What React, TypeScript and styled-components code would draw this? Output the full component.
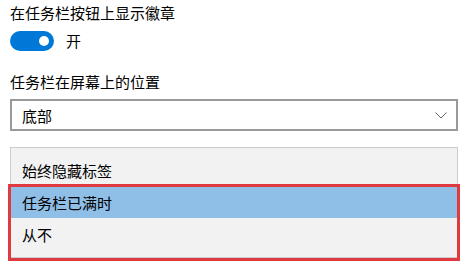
import styled, { createGlobalStyle } from "styled-components";

const GlobalStyle = createGlobalStyle`
  html, body {
    margin: 0;
    padding: 0;
    background: #ffffff;
  }
  body {
    font-family: "Noto Sans CJK SC", "Noto Sans", sans-serif;
    color: #000000;
  }
`;

const Page = styled.div`
  width: 471px;
  height: 268px;
  overflow: hidden;
  padding: 3px 13px 0 10px;
  box-sizing: border-box;
`;

const Label = styled.div`
  font-size: 15px;
  line-height: 20px;
`;

const ToggleRow = styled.div`
  display: flex;
  align-items: center;
  gap: 12px;
  margin-top: 8px;
  height: 20px;
`;

const Toggle = styled.div<{ $on: boolean }>`
  width: 44px;
  height: 20px;
  border-radius: 10px;
  background: ${(p) => (p.$on ? "#0078d7" : "#ffffff")};
  box-sizing: border-box;
  display: flex;
  align-items: center;
  justify-content: ${(p) => (p.$on ? "flex-end" : "flex-start")};
  padding: 0 5px;
`;

const Knob = styled.span`
  width: 10px;
  height: 10px;
  border-radius: 50%;
  background: #ffffff;
`;

const ToggleText = styled.span`
  font-size: 15px;
  line-height: 20px;
`;

const Section = styled.div`
  margin-top: 21px;
`;

const Select = styled.div`
  margin-top: 7px;
  height: 32px;
  border: 2px solid #999999;
  box-sizing: border-box;
  display: flex;
  align-items: center;
  justify-content: space-between;
  padding: 0 9px 0 10px;
  font-size: 15px;
`;

const List = styled.div`
  margin-top: 16px;
  background: #f2f2f2;
  border: 1px solid #cccccc;
  padding: 6px 0 7px;
`;

const Item = styled.div<{ $selected?: boolean }>`
  height: 32px;
  display: flex;
  align-items: center;
  padding: 0 11px;
  font-size: 15px;
  background: ${(p) => (p.$selected ? "#8fbee7" : "transparent")};
`;

const Marked = styled.div`
  position: relative;
  &::after {
    content: "";
    position: absolute;
    left: -3px;
    right: -3px;
    top: -2px;
    bottom: -11px;
    border: 3px solid #df3a40;
    pointer-events: none;
  }
`;

export default function App() {
  return (
    <>
      <GlobalStyle />
      <Page>
        <Label>在任务栏按钮上显示徽章</Label>
        <ToggleRow>
          <Toggle $on>
            <Knob />
          </Toggle>
          <ToggleText>开</ToggleText>
        </ToggleRow>
        <Section>
          <Label>任务栏在屏幕上的位置</Label>
          <Select>
            <span>底部</span>
            <svg width="12" height="7" viewBox="0 0 12 7">
              <path d="M0.5 0.5 L6 6 L11.5 0.5" fill="none" stroke="#666666" strokeWidth="1" />
            </svg>
          </Select>
        </Section>
        <List>
          <Item>始终隐藏标签</Item>
          <Marked>
            <Item $selected>任务栏已满时</Item>
            <Item>从不</Item>
          </Marked>
        </List>
      </Page>
    </>
  );
}
